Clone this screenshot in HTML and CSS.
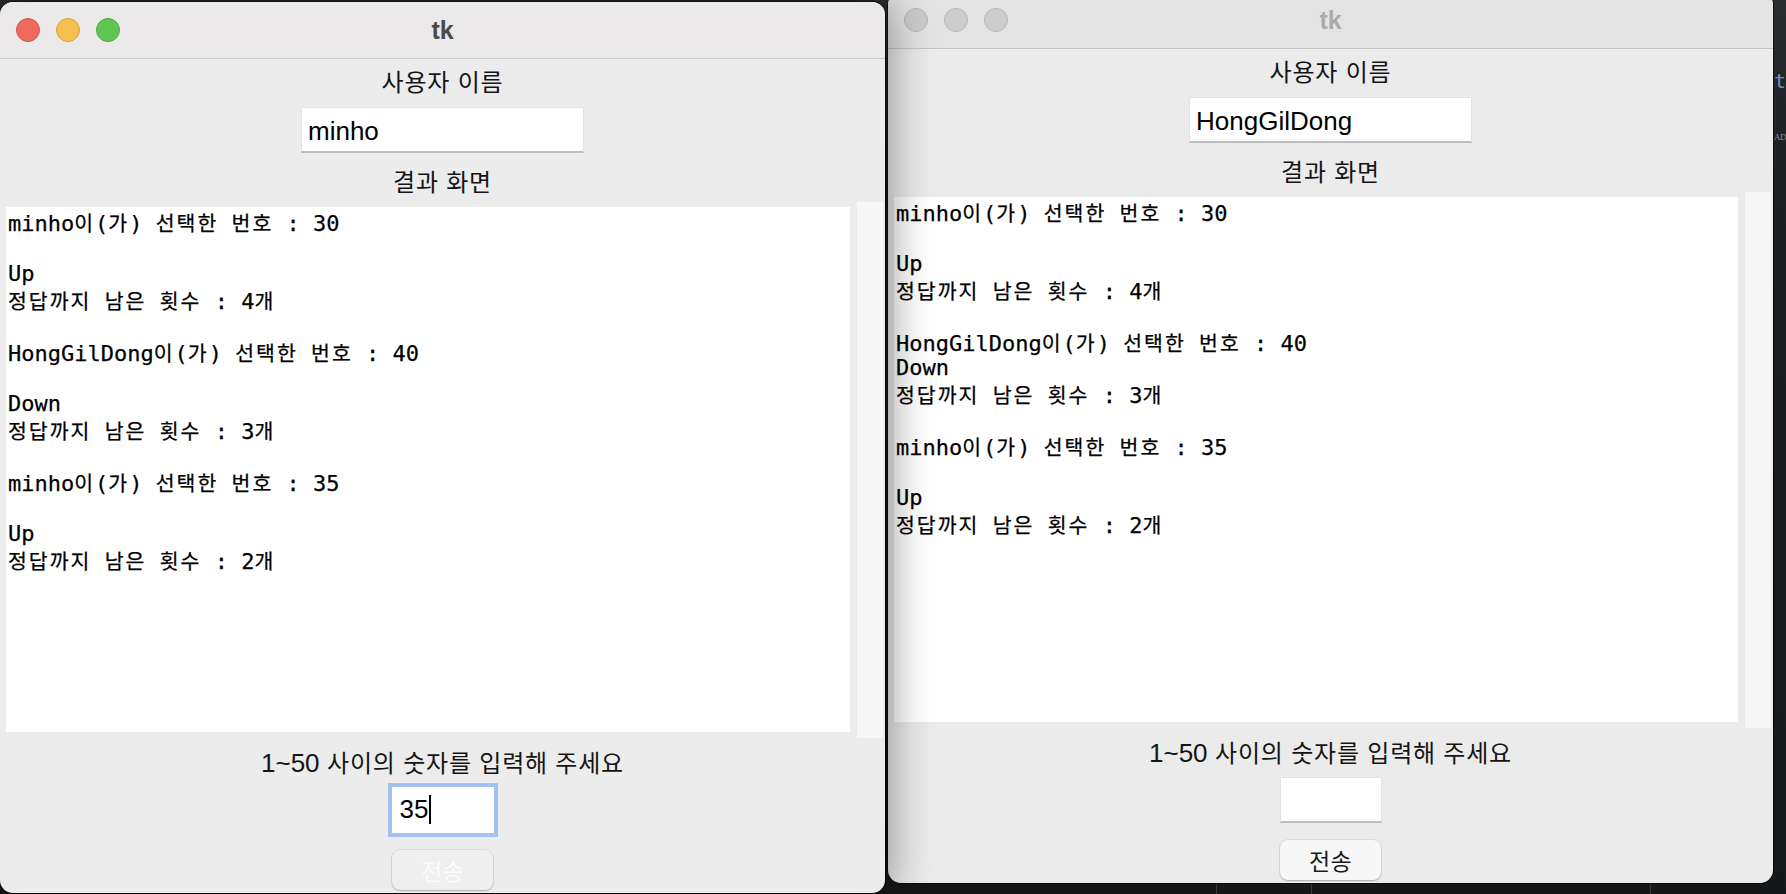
FILE: index.html
```html
<!DOCTYPE html>
<html lang="ko">
<head>
<meta charset="utf-8">
<title>tk</title>
<link rel="stylesheet" href="styles.css">
</head>
<body>
<div class="desktop">
  <div class="backdrop-code">
    <div class="code-line code-blue">t</div>
    <div class="code-line code-gray">AD</div>
  </div>
  <div class="backdrop-rule rule-a"></div>
  <div class="backdrop-rule rule-b"></div>
  <div class="backdrop-rule rule-c"></div>

  <div class="window win-right inactive">
    <div class="titlebar">
      <div class="lights"><span class="light"></span><span class="light"></span><span class="light"></span></div>
      <div class="title">tk</div>
      <div></div>
    </div>
    <div class="content">
      <div class="label label-user">사용자 이름</div>
      <div class="entry name-entry">HongGilDong</div>
      <div class="label label-result">결과 화면</div>
      <div class="text-row">
        <div class="textarea">
<div class="ln">minho<span class="ko">이</span>(<span class="ko">가</span>) <span class="ko">선택한</span> <span class="ko">번호</span> : 30</div>
<div class="ln"></div>
<div class="ln">Up</div>
<div class="ln"><span class="ko">정답까지</span> <span class="ko">남은</span> <span class="ko">횟수</span> : 4<span class="ko">개</span></div>
<div class="ln"></div>
<div class="ln">HongGilDong<span class="ko">이</span>(<span class="ko">가</span>) <span class="ko">선택한</span> <span class="ko">번호</span> : 40</div>
<div class="ln">Down</div>
<div class="ln"><span class="ko">정답까지</span> <span class="ko">남은</span> <span class="ko">횟수</span> : 3<span class="ko">개</span></div>
<div class="ln"></div>
<div class="ln">minho<span class="ko">이</span>(<span class="ko">가</span>) <span class="ko">선택한</span> <span class="ko">번호</span> : 35</div>
<div class="ln"></div>
<div class="ln">Up</div>
<div class="ln"><span class="ko">정답까지</span> <span class="ko">남은</span> <span class="ko">횟수</span> : 2<span class="ko">개</span></div>
        </div>
        <div class="scrollbar"></div>
      </div>
      <div class="label label-prompt"><span class="num">1~50</span> 사이의 숫자를 입력해 주세요</div>
      <div class="entry num-entry"></div>
      <div class="button button-normal">전송</div>
    </div>
  </div>

  <div class="window win-left active">
    <div class="titlebar">
      <div class="lights"><span class="light red"></span><span class="light yellow"></span><span class="light green"></span></div>
      <div class="title">tk</div>
      <div></div>
    </div>
    <div class="content">
      <div class="label label-user">사용자 이름</div>
      <div class="entry name-entry">minho</div>
      <div class="label label-result">결과 화면</div>
      <div class="text-row">
        <div class="textarea">
<div class="ln">minho<span class="ko">이</span>(<span class="ko">가</span>) <span class="ko">선택한</span> <span class="ko">번호</span> : 30</div>
<div class="ln"></div>
<div class="ln">Up</div>
<div class="ln"><span class="ko">정답까지</span> <span class="ko">남은</span> <span class="ko">횟수</span> : 4<span class="ko">개</span></div>
<div class="ln"></div>
<div class="ln">HongGilDong<span class="ko">이</span>(<span class="ko">가</span>) <span class="ko">선택한</span> <span class="ko">번호</span> : 40</div>
<div class="ln"></div>
<div class="ln">Down</div>
<div class="ln"><span class="ko">정답까지</span> <span class="ko">남은</span> <span class="ko">횟수</span> : 3<span class="ko">개</span></div>
<div class="ln"></div>
<div class="ln">minho<span class="ko">이</span>(<span class="ko">가</span>) <span class="ko">선택한</span> <span class="ko">번호</span> : 35</div>
<div class="ln"></div>
<div class="ln">Up</div>
<div class="ln"><span class="ko">정답까지</span> <span class="ko">남은</span> <span class="ko">횟수</span> : 2<span class="ko">개</span></div>
        </div>
        <div class="scrollbar"></div>
      </div>
      <div class="label label-prompt"><span class="num">1~50</span> 사이의 숫자를 입력해 주세요</div>
      <div class="entry num-entry focused">35<span class="caret"></span></div>
      <div class="button button-disabled">전송</div>
    </div>
  </div>
</div>
</body>
</html>
```
FILE: styles.css
```css
* { box-sizing: border-box; }

html, body {
  margin: 0;
  padding: 0;
}

body {
  width: 1786px;
  height: 894px;
  overflow: hidden;
  background: #1c1d1f;
}

.desktop {
  position: relative;
  width: 1786px;
  height: 894px;
  overflow: hidden;
  background: linear-gradient(#2b2c2f, #1d1e20 20%, #161719);
}

/* bits of the editor behind the windows */
.backdrop-code {
  position: absolute;
  left: 1774px;
  top: 68px;
  width: 12px;
  font-family: "DejaVu Sans Mono", monospace;
  font-size: 20px;
  line-height: 26px;
}
.code-line { white-space: pre; }
.code-blue { color: #6d8bd0; }
.code-gray {
  color: #8f8f8f;
  margin-top: 30px;
  font-family: "Liberation Serif", serif;
  font-size: 9px;
  letter-spacing: -0.5px;
}

.backdrop-rule {
  position: absolute;
  top: 884px;
  width: 1px;
  height: 10px;
  background: #34363a;
}
.rule-a { left: 1216px; }
.rule-b { left: 1311px; }
.rule-c { left: 1650px; }

/* windows */
.window {
  position: absolute;
  width: 885px;
  height: 891px;
  border-radius: 13px;
  overflow: hidden;
  display: flex;
  flex-direction: column;
  background: #ececec;
}

.win-left {
  left: 0;
  top: 2px;
  z-index: 2;
  box-shadow: 0 0 0 1px rgba(0, 0, 0, 0.55), 0 0 46px 4px rgba(0, 0, 0, 0.42);
}

.win-right {
  left: 888px;
  top: -8px;
  z-index: 1;
  background: #ebebeb;
  box-shadow: 0 0 0 1px rgba(0, 0, 0, 0.55);
}

.titlebar {
  flex: none;
  height: 57px;
  display: grid;
  grid-template-columns: 1fr auto 1fr;
  align-items: center;
  background: #ebe9ea;
  border-bottom: 1px solid #c9c7c8;
}

.inactive .titlebar {
  background: #e4e4e4;
  border-bottom-color: #c4c4c4;
}

.lights {
  display: flex;
  gap: 16px;
  padding-left: 16px;
}

.light {
  width: 24px;
  height: 24px;
  border-radius: 50%;
  border: 1px solid #b6b6b6;
  background: #cdcdcd;
}
.light.red { background: #ee6a5f; border-color: #d4564c; }
.light.yellow { background: #f5bf4f; border-color: #d9a23f; }
.light.green { background: #61c554; border-color: #4fa943; }

.title {
  font-family: "Liberation Sans", Arial, sans-serif;
  font-weight: bold;
  font-size: 25px;
  color: #4a4a4a;
}
.inactive .title { color: #ababab; }

/* content */
.content {
  flex: 1;
  display: flex;
  flex-direction: column;
  align-items: center;
}

.label {
  font-family: "Liberation Sans", "Noto Sans CJK KR", sans-serif;
  font-size: 24px;
  letter-spacing: 0.8px;
  line-height: 30px;
  height: 30px;
  color: #141414;
  white-space: nowrap;
}
.label .num {
  font-size: 26px;
  letter-spacing: 0;
}

.label-user { margin-top: 9px; }
.label-result { margin-top: 15px; }
.label-prompt { margin-top: 10px; }

.entry {
  background: #ffffff;
  height: 46px;
  border: 1px solid #e3e3e3;
  border-bottom: 2px solid #bdbdbd;
  font-family: "Liberation Sans", Arial, sans-serif;
  font-size: 26px;
  color: #000;
  white-space: nowrap;
}

.name-entry {
  width: 283px;
  margin-top: 9px;
  padding: 4px 0 0 6px;
  line-height: 39px;
}

.num-entry {
  width: 102px;
  margin-top: 9px;
  padding-left: 7px;
  display: flex;
  align-items: center;
}

.num-entry.focused {
  border-color: #ffffff;
  outline: 4px solid #a3c1f1;
}

.caret {
  display: inline-block;
  width: 2px;
  height: 29px;
  margin-left: 1px;
  background: #000;
}

.text-row {
  align-self: stretch;
  display: flex;
  align-items: flex-start;
  gap: 7px;
  padding-left: 6px;
  margin-top: 4px;
  height: 536px;
}

.textarea {
  width: 844px;
  height: 525px;
  margin-top: 5px;
  padding: 2px 0 0 2px;
  background: #ffffff;
  font-family: "DejaVu Sans Mono", "Noto Sans CJK KR", monospace;
  font-size: 22px;
  color: #000;
  -webkit-text-stroke: 0.25px #000;
  overflow: hidden;
}

.ln {
  height: 26px;
  line-height: 26px;
  white-space: pre;
}

.ko {
  font-family: "Noto Sans CJK KR", sans-serif;
  font-size: 20.5px;
  letter-spacing: 2px;
}

.scrollbar {
  width: 26px;
  height: 536px;
  background: #f7f7f7;
}

.button {
  width: 101px;
  height: 40px;
  margin-top: 17px;
  border-radius: 8px;
  display: flex;
  align-items: center;
  justify-content: center;
  font-family: "Noto Sans CJK KR", sans-serif;
  font-size: 23px;
  letter-spacing: 0.4px;
  box-shadow: 0 0 0 1px rgba(0, 0, 0, 0.06), 0 1px 1.5px rgba(0, 0, 0, 0.22);
}

.button-disabled {
  background: #efefef;
  color: #fbfbfb;
}

.button-normal {
  background: #f7f7f7;
  color: #1b1b1b;
}
```
